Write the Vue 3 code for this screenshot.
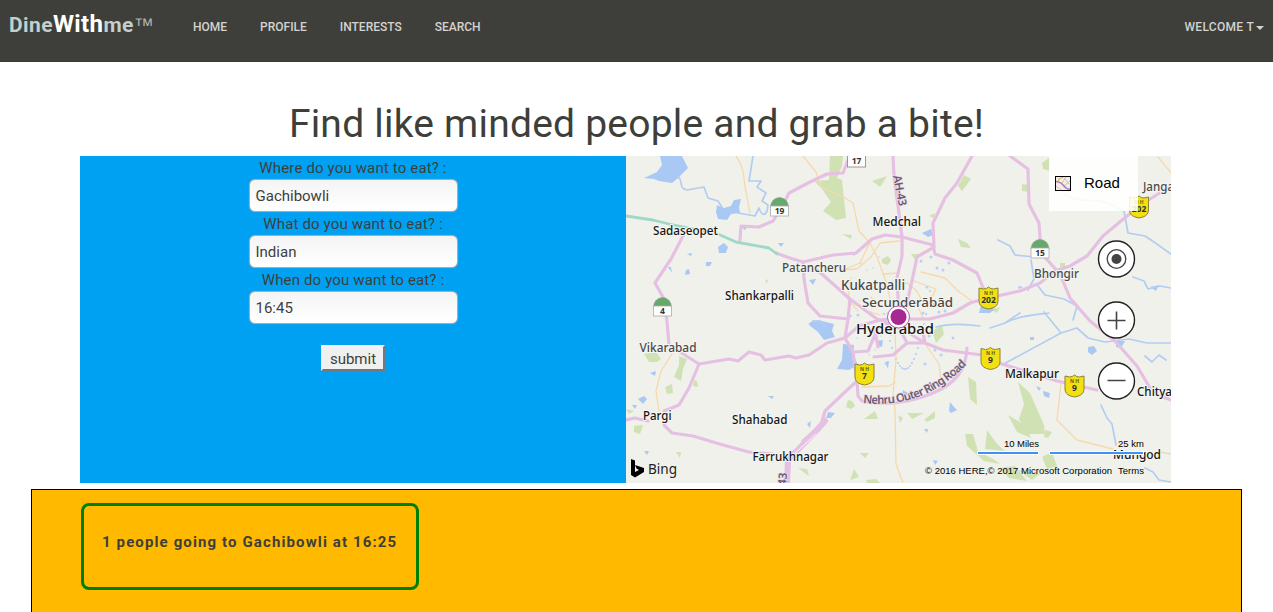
<script setup>
import { reactive } from 'vue'

const links = ['HOME', 'PROFILE', 'INTERESTS', 'SEARCH']

const fields = reactive([
  { id: 'where', label: 'Where do you want to eat? :', value: 'Gachibowli' },
  { id: 'what', label: 'What do you want to eat? :', value: 'Indian' },
  { id: 'when', label: 'When do you want to eat? :', value: '16:45' },
])

const lakes = [
  'M660 156 L682 156 L688 168 L678 178 L672 183 L659 181 L654 179 L644 178 L657 172 L662 165Z',
  'M717 205 L724 208 L731 206 L734 200 L741 199 L739 207 L740 213 L731 214 L727 220 L718 219 L716 212Z',
  'M718 247 L724 243 L728 247 L726 253 L719 253Z',
  'M706 262l6 0l-2 4l-4 0Z', 'M686 270l3 -1l1 5l-5 1Z', 'M668 267l3 0l1 6Z', 'M687 254l5 -1l-1 3Z',
  'M741 227l6 0l-2 3Z', 'M778 243l6 0l-3 4Z', 'M809 280l7 -1l-3 6Z',
  'M809 325 L818 320 L826 322 L834 324 L832 331 L835 337 L824 340 L818 332Z',
  'M843 344 L854 345 L853 354 L858 365 L849 370 L837 369 L842 360Z',
  'M922 233l9 -4l2 6l-5 2Z', 'M981 305 L988 306 L995 309 L990 313 L979 313Z',
  'M950 402 L954 407 L957 410 L951 413 L949 411Z', 'M828 412l7 1l-4 5l-5 0Z',
  'M924 429l4 0l-1 4Z', 'M933 460l5 1l-3 4Z', 'M1116 341l9 0l-4 7l-5 -1Z',
  'M1088 347l6 -1l3 5l-5 4l-4 -3Z', 'M1030 337l4 0l0 3l-4 0Z', 'M1150 287l9 -2l-3 6Z',
  'M1036 386l5 2l-2 3Z', 'M1043 391l7 2l-1 5l-5 -2Z', 'M638 399l6 -3l3 3l-4 5Z',
  'M650 373l6 -2l-1 5Z', 'M632 405l5 0l-2 4Z', 'M768 396l6 0l-2 3Z', 'M807 424l4 -3l-1 7Z',
  'M808 324l6 -4l4 7Z', 'M644 451l5 0l-2 4Z', 'M1018 286l5 1l-4 2Z', 'M877 341l6 -1l-1 7l-5 -1Z',
  'M903 390l5 3l-2 5l-4 -3Z', 'M885 362l4 -1l-1 8Z',
]

const woods = [
  'M830 156 L843 156 L842 166 L837 178 L842 180 L846 218 L836 220 L823 211 L831 202 L822 189 L814 181 L829 180Z',
  'M872 181l15 -5l-7 11Z', 'M842 234l10 1l-1 4Z', 'M958 186l6 -11l7 4l-9 12Z',
  'M958 239l9 4l4 5l-10 -1Z', 'M911 254l7 0l-3 6Z', 'M882 259l6 -3l3 4l-3 5l-6 -2Z',
  'M929 216l6 -3l-1 5Z', 'M1042 163l8 -6v14l-7 -2Z', 'M1022 184l7 1v7l-7 -1Z',
  'M644 354l12 -2l5 7l-4 3l-8 0Z', 'M679 356l8 3l-4 10l-2 12l-7 -4l5 -12Z',
  'M665 387l7 -3l1 9l-6 1Z', 'M694 380l3 1l1 6l-5 -1Z', 'M634 426l9 -1l-3 9l-6 -2Z',
  'M626 409l8 2l-5 3Z', 'M676 452l5 0l-1 6Z', 'M798 468l9 1l2 7Z',
  'M848 400l4 1l3 5l-4 3l-5 -2Z', 'M864 419l11 -8l3 8Z', 'M898 415l5 3l-3 5Z',
  'M907 413l17 0l-12 6Z', 'M924 420l11 -9v7l-8 4Z', 'M860 453l9 0l-4 5Z',
  'M854 469l5 8l-9 3Z', 'M866 480l10 -1l4 4h-13Z', 'M968 377l8 5l1 23l-7 -6Z',
  'M965 434l8 0l5 17l15 8l7 5l-16 -3l-17 -15Z', 'M987 430l10 14l8 7l-20 -2Z',
  'M1018 382 L1030 393 L1044 425 L1045 434 L1028 434 L1019 419 L1024 404Z',
  'M1008 415 L1025 425 L1031 438 L1017 432Z', 'M1045 430l7 2l-4 6l-4 -1Z',
  'M990 443l8 2l-4 5Z', 'M1000 468l15 -2l12 15l-18 -3Z', 'M1042 457l10 -5l5 14l-10 3Z',
  'M932 331l10 -6l2 9l-8 9Z', 'M992 310l8 -3l-3 6Z', 'M1060 263l5 0l0 4l-5 0Z',
  'M765 281l3 -2l-1 5Z', 'M1018 470l22 4l-8 6Z',
]

const streams = [
  'M678 176 C684 183 678 188 687 190 L704 187 L708 198 L718 201 L722 207 M738 213 L755 216 L759 208 Q763 219 767 211 L768 205 L762 201 L766 193 L757 187 L761 181 L749 181 L753 156',
  'M998 240 L1010 246 L1015 255 L1035 257 M1031 260 L1034 279 L1028 290 M1038 286 L1045 295 L1064 299 L1077 306 L1073 320',
  'M1124 211 L1128 233 L1145 236 L1154 242 L1171 254 M1133 277 L1144 281 L1148 289 L1160 286 L1171 288',
  'M990 328 L1005 323 L1020 313 M1044 312 L1061 333 L1077 328 L1088 338 L1105 342 L1129 339 L1147 343 L1171 343 M1061 333 L1002 365',
  'M936 327 C950 323 965 324 980 326 M1101 405 L1107 418 L1112 424 L1116 445 M1145 468 L1153 472 L1159 480 L1171 482',
  'M1145 356 L1152 362 L1159 355 L1166 360 M813 321 L820 321 L826 327',
  'M1007 322 C1018 316 1034 315 1049 313',
]
const faintStream = 'M1064 194 C1080 205 1095 196 1112 205 L1124 211'

const minorRoads = [
  'M736 156 C746 170 743 181 746 192 L750 213 M803 156 L816 172 L821 187 L842 196 L853 203 L859 231 L870 243 L877 257 L887 284 L893 315',
  'M870 242 L860 263 L843 270 L857 269 L871 257 L880 243 L899 241',
  'M672 354 L661 371 L656 391 L659 411 M895 330 L896 360 L893 394 L895 410 L896 464 L903 483 M862 387 L889 386 L896 382',
  'M926 345 L939 364 L941 382 M921 272 L945 278 L958 291 L972 301 M883 274 L898 273 M886 287 L907 283 L916 290 L926 307',
  'M1061 383 L1057 420 L1077 440 L1093 444 L1113 449 M1160 452 L1171 454 M1172 174 L1158 157',
  'M914 281 L936 289 L931 299 M903 310 L916 303 L923 318 M851 278 L848 299 L858 311 M871 297 L878 306 L888 307 M870 312 L880 315',
]

const majorRoads = [
  'M776 253 L790 258 L803 262 L833 255 L856 253 L872 239 L885 235 L902 237 L933 245 L935 254 L953 260 L977 273 L984 290',
  'M893 156 L894 176 L898 206 L902 237 L902 256 L897 278 L899 316',
  'M972 156 L957 183 L945 198 L933 223 L934 247 L917 257 L913 276 L908 299 L899 318',
  'M848 160 L843 173 L827 174 L810 182 L789 193 L783 205 L773 221 L759 227 L741 226 L740 240',
  'M684 234 L671 259 L655 283 L664 299 L667 321 L669 345 L699 364 L729 359 L738 361 L749 352 L761 355 L765 360 L789 356 L796 358 L809 355 L827 343 L845 338 L859 326 L880 320 L897 318',
  'M699 364 L689 388 L679 405 L664 411 M626 420 L635 418 L648 421 M664 425 L672 433 L693 436 L723 445 L749 452 L773 454',
  'M803 262 L804 279 L808 303 L820 316 L848 319 L845 338 L853 352 L857 381 L858 396 L862 401 C890 406 911 402 933 393 C954 384 966 372 967 348',
  'M816 269 L832 283 L850 299 L877 319 L899 328 M848 319 L850 299',
  'M857 381 L845 392 L825 411 L821 425 L803 441 M907 319 L930 319 L953 313 L970 303 L984 299 L1020 291 L1040 283 L1055 271 L1070 266 L1087 256 L1103 236 L1127 216 L1150 199 L1171 186',
  'M1010 156 L1028 169 L1029 204 L1039 223 L1041 253 L1060 274 L1070 298 L1090 321 L1115 341 L1137 366 L1150 388',
  'M907 343 L925 343 L943 350 L982 355 L1002 364 L1057 381 L1097 390 M1155 394 L1171 400',
  'M878 328 L868 351 L855 352 M874 357 L893 355 L907 343 L899 327 L925 343 L922 328 M875 331 L878 347',
]

const places = [
  { name: 'Sadaseopet', x: 653, y: 234.5, w: 65 },
  { name: 'Medchal', x: 872.5, y: 225.5, w: 48.5 },
  { name: 'Shankarpalli', x: 725, y: 300, w: 69 },
  { name: 'Patancheru', x: 782, y: 272, w: 64, soft: true },
  { name: 'Kukatpalli', x: 841, y: 290, w: 64, soft: true, size: 13.5 },
  { name: 'Secunderābād', x: 862, y: 307, w: 91, soft: true, size: 13 },
  { name: 'Hyderabad', x: 856, y: 333.5, w: 78, size: 15 },
  { name: 'Bhongir', x: 1034, y: 278, w: 45, soft: true },
  { name: 'Janga', x: 1143, y: 191, w: 31, soft: true },
  { name: 'Vikarabad', x: 639.5, y: 352, w: 57, soft: true },
  { name: 'Pargi', x: 643, y: 419.5, w: 28.5 },
  { name: 'Shahabad', x: 732, y: 424, w: 55.5 },
  { name: 'Farrukhnagar', x: 752.5, y: 461, w: 76 },
  { name: 'Malkapur', x: 1005, y: 378, w: 54 },
  { name: 'Chitya', x: 1137, y: 396, w: 35 },
  { name: 'Mungod', x: 1113, y: 459, w: 48 },
]

const stateSigns = [
  { n: '19', x: 779.5, y: 206 },
  { n: '4', x: 662.5, y: 306 },
  { n: '15', x: 1040, y: 248 },
]

const shields = [
  { n: '202', x: 988.5, y: 298 },
  { n: '202', x: 1139, y: 207 },
  { n: '9', x: 990.5, y: 358.5 },
  { n: '7', x: 864.5, y: 374 },
  { n: '9', x: 1074.5, y: 386 },
]

// Small ponds scattered around the city
const ponds = Array.from({ length: 72 }, (_, i) => ({
  x: 847 + ((i * 37) % 109),
  y: 254 + ((i * 53 + i * i * 7) % 127),
  r: 0.7 + (i % 3) * 0.4,
}))
</script>

<template>
  <div class="page">
    <nav class="nav">
      <a class="brand"><b>Dine</b><b class="with">With</b><b>me</b><span class="tm">™</span></a>
      <ul class="links">
        <li v-for="l in links" :key="l">{{ l }}</li>
      </ul>
      <div class="user"><span>WELCOME T</span><i class="caret"></i></div>
    </nav>

    <h1>Find like minded people and grab a bite!</h1>

    <section class="panels">
      <form class="form" @submit.prevent>
        <div v-for="f in fields" :key="f.id" class="field">
          <label :for="f.id">{{ f.label }}</label>
          <input :id="f.id" v-model="f.value" type="text" />
        </div>
        <button type="submit">submit</button>
      </form>

      <div class="map">
        <svg class="tiles" viewBox="626 156 545 327" width="545" height="327">
          <rect x="626" y="156" width="545" height="327" fill="#f0f1eb" />
          <g fill="#d0e2b4"><path v-for="(d, i) in woods" :key="i" :d="d" /></g>
          <g fill="#a9c8f4"><path v-for="(d, i) in lakes" :key="i" :d="d" /></g>
          <g fill="#b5d0f4"><circle v-for="(p, i) in ponds" :key="i" :cx="p.x" :cy="p.y" :r="p.r" /></g>
          <g class="line" stroke="#b3cdf2" stroke-width="1.7"><path v-for="(d, i) in streams" :key="i" :d="d" /></g>
          <path class="line" :d="faintStream" stroke="#b3cdf2" stroke-width="1.5" />
          <g class="line" stroke="#f5d9ab" stroke-width="1.3"><path v-for="(d, i) in minorRoads" :key="i" :d="d" /></g>
          <g class="line" stroke="#e6c0e3" stroke-width="3.2"><path v-for="(d, i) in majorRoads" :key="i" :d="d" /></g>
          <path class="line" d="M787 483 L788 460 L816 431 L825 421" stroke="#e6c0e3" stroke-width="6" />
          <path class="line" d="M793 455 L816 434" stroke="#f3e2f1" stroke-width="1.2" />
          <path class="line" d="M626 216 L653 220 L669 224 L718 234 L736 242 L769 248 L777 254" stroke="#a0d8c8" stroke-width="2.8" />

          <g v-for="s in stateSigns" :key="s.n">
            <path :transform="`translate(${s.x} ${s.y})`" d="M-9 1a9 9.5 0 0 1 18 0Z" fill="#68a86d" stroke="#84a488" stroke-width=".6" />
            <rect :x="s.x - 9" :y="s.y" width="18" height="10" fill="#fff" stroke="#aaa" stroke-width=".8" />
            <text class="sign" :x="s.x" :y="s.y + 8">{{ s.n }}</text>
          </g>
          <rect x="847.5" y="150" width="18" height="17" fill="#fff" stroke="#999" />
          <text class="sign" x="856.5" y="164">17</text>

          <g v-for="(s, i) in shields" :key="i" :transform="`translate(${s.x} ${s.y})`">
            <path d="M-9.5 -10L-5 -9Q-2 -9 0 -11Q2 -9 5 -9L9.5 -10V3Q9.500 8 4 10L0 11L-4 10Q-9.500 8 -9.500 3Z" fill="#f2e010" stroke="#8b8334" />
            <text class="nh" x="0" y="-3.500">N H</text>
            <text class="sign" x="0" y="4.500">{{ s.n }}</text>
          </g>

          <text
            v-for="p in places" :key="p.name" class="place" :class="{ soft: p.soft }"
            :x="p.x" :y="p.y" :textLength="p.w" lengthAdjust="spacingAndGlyphs" :font-size="p.size || 12.5"
          >{{ p.name }}</text>

          <path id="ring" d="M863 403 Q924 410 969 362" fill="none" />
          <text class="road"><textPath href="#ring" textLength="115">Nehru Outer Ring Road</textPath></text>
          <text class="road" transform="translate(893 176) rotate(79)" textLength="31">AH-43</text>
          <text class="road" transform="translate(786 486) rotate(-85)">43</text>

          <circle cx="898.5" cy="317" r="11" fill="#fff" stroke="#b05aa8" stroke-width="1" />
          <circle cx="898.5" cy="317" r="8" fill="#a72890" />

          <rect x="1049" y="156" width="89" height="55" fill="#fff" fill-opacity=".88" />
          <g>
            <rect x="1055.5" y="176.500" width="15" height="14" fill="#f2eee4" stroke="#000" />
            <path d="M1064 178L1069 184M1056 186L1061 190M1066 177L1062 183M1070 181L1064 186" stroke="#c9c5b8" fill="none" />
            <path d="M1058 181Q1059 178 1063 177.500" stroke="#f0a94a" stroke-width="1.200" fill="none" />
            <path d="M1056 181.500Q1061 182 1064 186T1070 189" stroke="#b07bc9" stroke-width="1.700" fill="none" />
          </g>
          <text class="mode" x="1084" y="188">Road</text>

          <g fill="#fff" stroke="#222" stroke-width="1.4">
            <circle cx="1116.500" cy="259" r="18" />
            <circle cx="1116.500" cy="320" r="18" />
            <circle cx="1116.500" cy="381" r="18" />
          </g>
          <circle cx="1116.500" cy="259" r="9.3" fill="none" stroke="#444" stroke-width="1.3" />
          <circle cx="1116.500" cy="259" r="5" fill="#444" />
          <path d="M1107.500 320.500h18M1116.500 311.500v18M1107.500 380.500h18" stroke="#444" stroke-width="1.6" />

          <g stroke="#fff" stroke-width="4"><path d="M977 453H1039M1049 453H1144" /></g>
          <g stroke="#3c91f5" stroke-width="2"><path d="M978 453H1038M1050 453H1143" /></g>
          <g class="legal">
            <text x="1004" y="447" textLength="35">10 Miles</text>
            <text x="1118" y="447" textLength="26">25 km</text>
            <text x="925" y="474" textLength="187">© 2016 HERE,© 2017 Microsoft Corporation</text>
            <text x="1118" y="474" textLength="26">Terms</text>
          </g>

          <path d="M631 459L635 460.500V472L639 470L636.500 468.500L635 465L644 468V472L635 477.500L631 475Z" fill="#000" />
          <text class="bing" x="648" y="474" textLength="29" lengthAdjust="spacingAndGlyphs">Bing</text>
        </svg>
      </div>
    </section>

    <section class="results">
      <div class="result">1 people going to Gachibowli at 16:25</div>
    </section>
  </div>
</template>

<style>
body { overflow: hidden; }
</style>

<style scoped>
.page {
  height: 612px;
  overflow: hidden;
  background: #fff;
  color: #3e3f3a;
  font-family: Roboto, sans-serif;
}
.nav {
  box-sizing: border-box;
  display: flex;
  height: 62px;
  padding: 0 9px;
  background: #3e3f3a;
  border-bottom: 1px solid #393a35;
}
.brand {
  width: 167px;
  padding-top: 9px;
  font-size: 21px;
  line-height: 30px;
  letter-spacing: .4px;
  color: #c3cfcc;
  white-space: nowrap;
}
.with { font-size: 24px; color: #fff; }
.tm { font: 20px "Liberation Sans", sans-serif; line-height: 1; letter-spacing: 0; color: #b0b5b0; }
.links {
  display: flex;
  gap: 33px;
  margin: 0;
  padding: 0 0 0 17px;
  list-style: none;
}
.links, .user {
  font-size: 12px;
  font-weight: 500;
  line-height: 54px;
  color: #d3d3cf;
}
.user { margin-left: auto; letter-spacing: .3px; }
.caret {
  display: inline-block;
  margin-left: 2px;
  vertical-align: middle;
  border: 4px solid transparent;
  border-top-color: #d3d3cf;
  border-bottom: 0;
}
h1 {
  margin: 40px 0 9px;
  font-size: 39px;
  font-weight: 400;
  line-height: 45px;
  letter-spacing: .22px;
  text-align: center;
}
.panels { display: flex; width: 1091px; height: 327px; margin-left: 80px; }
.form {
  box-sizing: border-box;
  display: flex;
  flex-direction: column;
  align-items: center;
  width: 546px;
  background: #00a1f3;
  font-size: 15px;
}
.field {
  display: flex;
  flex-direction: column;
  align-items: center;
  height: 56px;
}
label { height: 23px; line-height: 25px; letter-spacing: .15px; }
input {
  box-sizing: border-box;
  width: 209px;
  height: 33px;
  padding: 2px 6px;
  border: 1px solid #aaa;
  border-radius: 6px;
  background: linear-gradient(#f4f4f4, #fff);
  box-shadow: 0 0 1px #aaa;
  color: #3e3f3a;
  font: 15px Roboto, sans-serif;
}
button {
  box-sizing: border-box;
  width: 64px;
  height: 26px;
  margin-top: 21px;
  padding: 1px 0 0;
  border: 2px solid;
  border-color: #f4f4f4 #777 #777 #f4f4f4;
  background: #f0f0f0;
  color: #3e3f3a;
  font: 15px Roboto, sans-serif;
}
.tiles { display: block; }
.line, .line path { fill: none; stroke-linejoin: round; stroke-linecap: round; }
.place {
  font-family: "Noto Sans", sans-serif;
  font-weight: 500;
  fill: #161616;
  stroke: #f5f5f1;
  stroke-width: 2px;
  paint-order: stroke;
}
.soft { fill: #4a4a4a; }
.sign { font: bold 8.500px "Noto Sans", sans-serif; fill: #333; text-anchor: middle; }
.nh { font: bold 5px "Noto Sans", sans-serif; fill: #635d1c; text-anchor: middle; }
.road {
  font: 600 11.500px "Noto Sans", sans-serif;
  fill: #6b5c71;
  stroke: #ecdcea;
  stroke-width: 1.500px;
  paint-order: stroke;
}
.mode { font: 15px "Liberation Sans", sans-serif; fill: #000; }
.legal { font: 9.500px "Liberation Sans", sans-serif; fill: #000; }
.bing { font: 15px "Noto Sans", sans-serif; fill: #222; }
.results {
  box-sizing: border-box;
  width: 1211px;
  height: 200px;
  margin: 6px 0 0 31px;
  padding: 13px 49px;
  border: 1px solid #000;
  background: #ffba00;
}
.result {
  box-sizing: border-box;
  width: 338px;
  height: 87px;
  padding-left: 18px;
  border: 3px solid #008000;
  border-radius: 8px;
  font-size: 15px;
  font-weight: 700;
  line-height: 72px;
  letter-spacing: 1.12px;
  white-space: nowrap;
}
</style>
